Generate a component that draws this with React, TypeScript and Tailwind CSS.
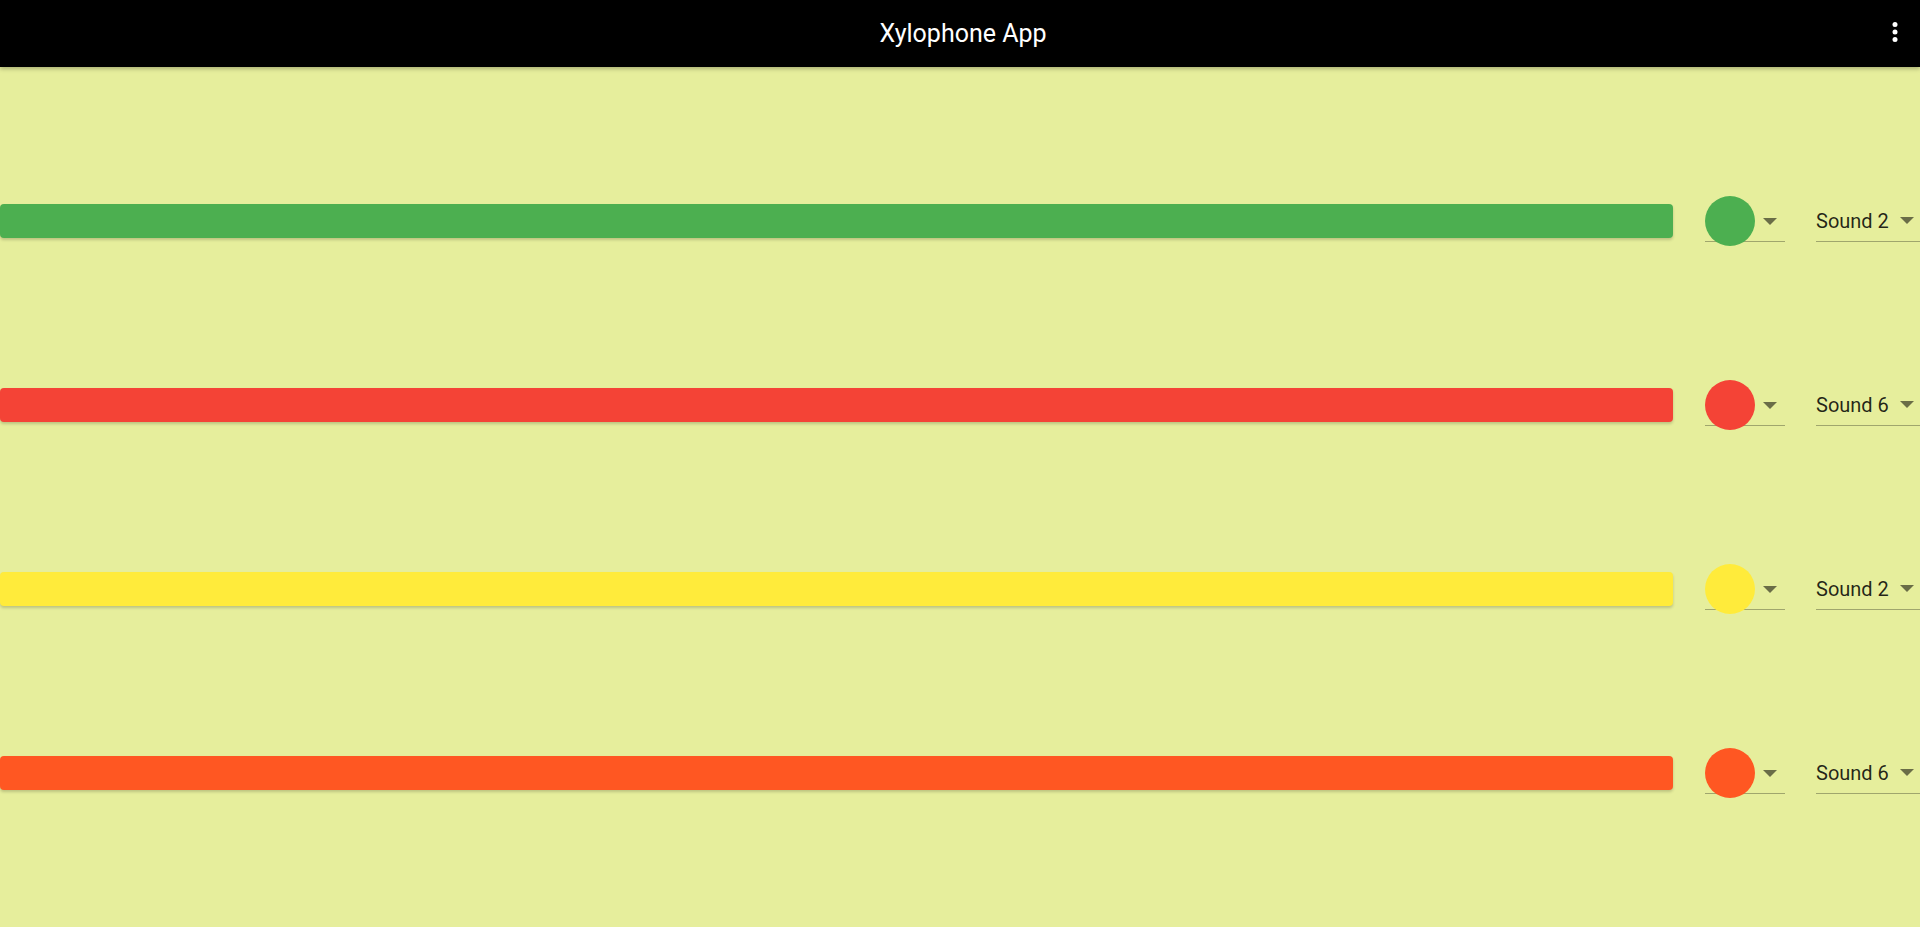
const bars = [
  { color: "bg-[#4caf50]", sound: "Sound 2" },
  { color: "bg-[#f44336]", sound: "Sound 6" },
  { color: "bg-[#ffeb3b]", sound: "Sound 2" },
  { color: "bg-[#ff5722]", sound: "Sound 6" },
];

function Arrow() {
  return (
    <svg width="14" height="7" viewBox="0 0 14 7" className="shrink-0">
      <path d="M0 0 L14 0 L7 7 Z" fill="rgba(0,0,0,0.54)" />
    </svg>
  );
}

function Row({ color, sound }: { color: string; sound: string }) {
  return (
    <div className="flex h-[50px] items-start">
      <div className={`mt-[8px] h-[34px] flex-1 rounded-[4px] ${color} shadow-[0_2px_3px_rgba(0,0,0,0.18)]`} />
      <div className="ml-[32px] flex h-[46px] w-[80px] items-start border-b border-black/30">
        <div className={`h-[50px] w-[50px] shrink-0 rounded-full ${color}`} />
        <div className="ml-[8px] mt-[22px]">
          <Arrow />
        </div>
      </div>
      <div className="ml-[31px] flex h-[46px] w-[104px] items-center border-b border-black/30 pt-[4px]">
        <span className="text-[20px] leading-none text-black/85">{sound}</span>
        <span className="ml-[11px]">
          <Arrow />
        </span>
      </div>
    </div>
  );
}

export default function App() {
  return (
    <div className="min-h-[927px] bg-[#e6ee9c] font-['Roboto',sans-serif]">
      <header className="relative z-10 flex h-[67px] items-center justify-center bg-black shadow-[0_2px_4px_rgba(0,0,0,0.25)]">
        <h1 className="ml-[6px] text-[25px] text-white">Xylophone App</h1>
        <button className="absolute right-[10px] top-[17px]">
          <svg width="30" height="30" viewBox="0 0 24 24" fill="white">
            <circle cx="12" cy="6" r="2" />
            <circle cx="12" cy="12" r="2" />
            <circle cx="12" cy="18" r="2" />
          </svg>
        </button>
      </header>
      <main className="flex flex-col gap-[134px] pt-[129px]">
        {bars.map((b, i) => (
          <Row key={i} color={b.color} sound={b.sound} />
        ))}
      </main>
    </div>
  );
}
